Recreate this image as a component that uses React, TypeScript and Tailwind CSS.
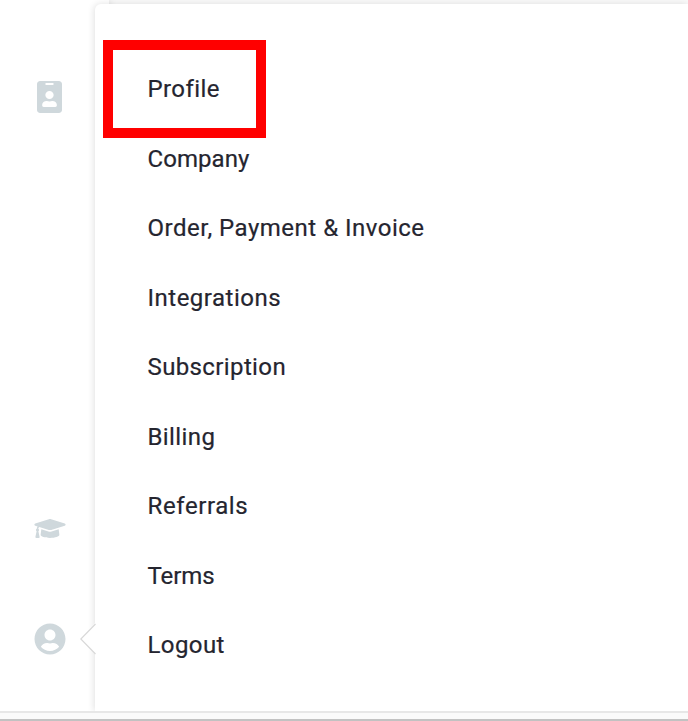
import { FaGraduationCap, FaIdBadge, FaUserCircle } from "react-icons/fa";

const items = [
  { label: "Profile", tracking: "tracking-[0.4px]", active: true },
  { label: "Company", tracking: "tracking-[0.05px]" },
  { label: "Order, Payment & Invoice", tracking: "tracking-[0.5px]" },
  { label: "Integrations", tracking: "tracking-[0.5px]" },
  { label: "Subscription", tracking: "tracking-[0.38px]" },
  { label: "Billing", tracking: "tracking-[0.4px]" },
  { label: "Referrals", tracking: "tracking-[0.6px]" },
  { label: "Terms", tracking: "tracking-[-0.1px]" },
  { label: "Logout", tracking: "tracking-[0.4px]" },
];

function Sidebar() {
  return (
    <aside className="flex w-[109px] shrink-0 flex-col items-center bg-white pt-[81px] pr-[18px] pl-2 text-[#cfd8dc] shadow-[0_0_8px_rgba(0,0,0,0.12)]">
      <FaIdBadge className="h-8 w-[25px]" preserveAspectRatio="none" />
      <FaGraduationCap className="mt-[403px] h-[25px] w-8" />
      <FaUserCircle className="mt-[82px] size-8" />
    </aside>
  );
}

function AccountMenu() {
  return (
    <nav className="relative mt-[4px] -ml-[14px] flex-1 rounded-tl-md bg-white pt-[50.5px] shadow-[-1px_0_7px_rgba(0,0,0,0.12)]">
      <svg className="absolute -left-[15px] top-[619px]" width="17" height="32" viewBox="0 0 17 32">
        <path d="M17 0H15L.7 15.7 15 31H17Z" fill="#fff" />
        <path d="M15.5 1 .8 16 15.5 31" fill="none" stroke="#d8d8d8" strokeWidth="1.2" />
      </svg>
      <ul>
        {items.map((item) => (
          <li key={item.label} className="relative flex h-[69.5px] items-center pl-[52.5px]">
            {item.active ? (
              <span className="absolute -top-[14.5px] left-2 h-[98px] w-[163px] border-[10px] border-[#ff0000]" />
            ) : null}
            <a
              href="#"
              className={`text-[24px] leading-none whitespace-nowrap [-webkit-text-stroke:0.2px_#25252f] ${item.tracking}`}
            >
              {item.label}
            </a>
          </li>
        ))}
      </ul>
    </nav>
  );
}

export default function App() {
  return (
    <div className="flex h-[721px] w-[688px] flex-col overflow-hidden bg-[#fafafa] font-['Roboto',sans-serif] text-[#25252f]">
      <div className="flex h-[711px] overflow-hidden">
        <Sidebar />
        <AccountMenu />
      </div>
      <div className="h-[2px] bg-[#e7e7e7]" />
      <div className="h-[6px] bg-[#fafafa]" />
      <div className="h-[2px] bg-[#c2c2c2]" />
    </div>
  );
}
